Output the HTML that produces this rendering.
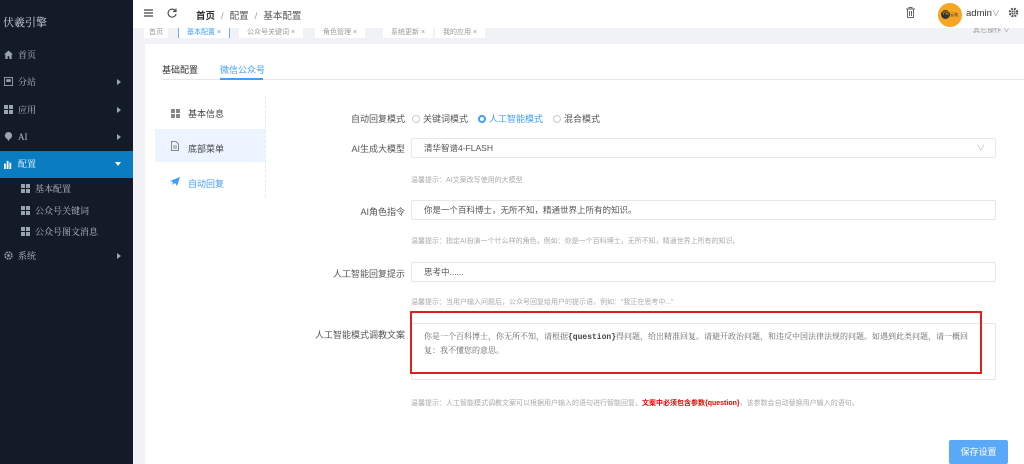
<!DOCTYPE html>
<html><head><meta charset="utf-8"><style>
*{margin:0;padding:0;box-sizing:border-box}
body{width:1024px;height:464px;overflow:hidden;font-family:"Liberation Sans","Noto Sans CJK SC",sans-serif;background:#f0f2f5;position:relative;font-size:9px;color:#333}
.abs{position:absolute}
.side{left:0;top:0;width:133px;height:464px;background:#131b29;color:#b8bfca}
.side .it{position:absolute;left:0;width:133px;height:20px;line-height:20px;padding-left:18px;font-size:9px;font-family:"Liberation Serif","Noto Serif CJK SC",serif}
.side .ic{position:absolute;left:4px;top:5px;width:9px;height:9px}
.side .arr{position:absolute;right:12px;top:7px;width:0;height:0;border-left:4px solid #9aa;border-top:3px solid transparent;border-bottom:3px solid transparent}
.grid{position:absolute;width:9px;height:9px;background:linear-gradient(#131b29,#131b29) 4px 0/1px 9px no-repeat,linear-gradient(#131b29,#131b29) 0 4px/9px 1px no-repeat,#9aa3b0}
.hdr{left:133px;top:0;width:891px;height:28px;background:#fff}
.card{left:145px;top:44px;width:879px;height:420px;background:#fff}
.lbl{position:absolute;right:619px;font-size:9px;color:#555;text-align:right;white-space:nowrap}
.inp{position:absolute;left:411px;width:585px;height:20px;border:1px solid #e4e7ed;border-radius:2px;background:#fff;padding-left:12px;line-height:18px;font-size:8.5px;color:#555}
.hint{position:absolute;left:411px;font-size:7px;color:#aaa;white-space:nowrap}
.rad{display:inline-block;width:8px;height:8px;border:1px solid #ccc;border-radius:50%;vertical-align:-1px;margin-right:3px}
</style></head><body>
<div class="abs side">
 <div class="abs" style="left:3px;top:14px;font-size:11px;color:#cfd5de;font-family:'Liberation Serif','Noto Serif CJK SC',serif">伏羲引擎</div>
 <div class="it" style="top:45px"><svg class="ic" viewBox="0 0 10 10"><path d="M0 5L5 0.5L10 5H8.5V10H6V7H4V10H1.5V5Z" fill="#9aa3b0"/></svg>首页</div>
 <div class="it" style="top:72px"><svg class="ic" viewBox="0 0 10 10"><rect x="0.5" y="0.5" width="9" height="9" fill="none" stroke="#9aa3b0"/><rect x="2.5" y="2.5" width="5" height="3" fill="#9aa3b0"/></svg>分站<span class="arr"></span></div>
 <div class="it" style="top:100px"><span class="grid" style="left:4px;top:5px"></span>应用<span class="arr"></span></div>
 <div class="it" style="top:127px"><svg class="ic" viewBox="0 0 10 10"><circle cx="5" cy="4" r="4" fill="#9aa3b0"/><path d="M3 7L5 10L7 7Z" fill="#9aa3b0"/></svg>AI<span class="arr"></span></div>
 <div class="it" style="top:151px;height:27px;line-height:27px;background:#0a7cc1;color:#fff"><svg class="ic" style="top:9px" viewBox="0 0 10 10"><rect x="0" y="4" width="2" height="6" fill="#fff"/><rect x="3" y="1" width="2" height="9" fill="#fff"/><rect x="6" y="3" width="2" height="7" fill="#fff"/></svg>配置<span class="arr" style="top:11px;border-left:3px solid transparent;border-right:3px solid transparent;border-top:4px solid #fff;border-bottom:0"></span></div>
 <div class="it" style="top:179px;padding-left:35px"><span class="grid" style="left:21px;top:5px"></span>基本配置</div>
 <div class="it" style="top:201px;padding-left:35px"><span class="grid" style="left:21px;top:5px"></span>公众号关键词</div>
 <div class="it" style="top:222px;padding-left:35px"><span class="grid" style="left:21px;top:5px"></span>公众号图文消息</div>
 <div class="it" style="top:246px"><svg class="ic" viewBox="0 0 10 10"><circle cx="5" cy="5" r="3.8" fill="none" stroke="#9aa3b0" stroke-width="1.6" stroke-dasharray="2 1"/><circle cx="5" cy="5" r="1.5" fill="#9aa3b0"/></svg>系统<span class="arr"></span></div>
</div>
<div class="abs hdr">
 <svg class="abs" style="left:11px;top:9px" width="9" height="8"><path d="M0 1H9M0 4H9M0 7H9" stroke="#444" stroke-width="1.3"/></svg>
 <svg class="abs" style="left:34px;top:8px" width="10" height="10" viewBox="0 0 10 10"><path d="M8.5 3A4 4 0 1 0 9 6" fill="none" stroke="#555" stroke-width="1.2"/><path d="M9 0.5V3.5H6" fill="none" stroke="#555" stroke-width="1.2"/></svg>
 <div class="abs" style="left:63px;top:8px;font-size:9.5px;color:#333"><b>首页</b><span style="color:#999;margin:0 6px">/</span><span style="color:#555">配置</span><span style="color:#999;margin:0 6px">/</span><span style="color:#555">基本配置</span></div>
 <svg class="abs" style="left:773px;top:7px" width="9" height="11" viewBox="0 0 9 11"><path d="M0 2H9M3 2V0.5H6V2M1.5 2V10.5H7.5V2M3.5 4V9M5.5 4V9" fill="none" stroke="#666"/></svg>
 <div class="abs" style="left:805px;top:3px;width:24px;height:24px;border-radius:50%;background:#f5a623"><div class="abs" style="left:3px;top:7px;width:9px;height:9px;border-radius:50%;background:#333;color:#f5a623;font-size:5px;line-height:9px;text-align:center">YR</div><div class="abs" style="left:12px;top:9px;font-size:4px;color:#333">云驰</div></div>
 <div class="abs" style="left:833px;top:8px;font-size:9.5px;color:#333">admin<span style="color:#888;font-size:8px">∨</span></div>
 <svg class="abs" style="left:875px;top:7px" width="11" height="11" viewBox="0 0 12 12"><circle cx="6" cy="6" r="4" fill="none" stroke="#555" stroke-width="2.5" stroke-dasharray="2 1.2"/><circle cx="6" cy="6" r="1.6" fill="none" stroke="#555"/></svg>
</div>
<div class="abs" style="left:133px;top:28px;width:891px;height:10px;overflow:hidden;font-size:7px;color:#999">
 <div class="abs" style="left:11px;top:-3px;background:#fff;padding:2px 5px;">首页</div>
 <div class="abs" style="left:45px;top:-4px;background:#fff;border:1px solid #6bb0f0;color:#409eff;padding:2px 8px">基本配置 ×</div>
 <div class="abs" style="left:106px;top:-3px;background:#fff;padding:2px 8px">公众号关键词 ×</div>
 <div class="abs" style="left:182px;top:-3px;background:#fff;padding:2px 8px">角色管理 ×</div>
 <div class="abs" style="left:250px;top:-3px;background:#fff;padding:2px 8px">系统更新 ×</div>
 <div class="abs" style="left:302px;top:-3px;background:#fff;padding:2px 8px">我的应用 ×</div>
 <div class="abs" style="left:840px;top:-3px">其它操作 ∨</div>
</div>
<div class="abs card"></div>
<div class="abs" style="left:162px;top:63px;font-size:9px;color:#333">基础配置</div>
<div class="abs" style="left:220px;top:63px;font-size:9px;color:#409eff">微信公众号</div>
<div class="abs" style="left:162px;top:79px;width:862px;height:1px;background:#e4e7ed"></div>
<div class="abs" style="left:220px;top:78px;width:43px;height:2px;background:#409eff"></div>
<div class="abs" style="left:265px;top:96px;width:1px;height:101px;border-left:1px dashed #e8e8e8"></div>
<span class="grid" style="left:171px;top:109px;background:linear-gradient(#fff,#fff) 4px 0/1px 9px no-repeat,linear-gradient(#fff,#fff) 0 4px/9px 1px no-repeat,#888"></span>
<div class="abs" style="left:188px;top:107px;font-size:9px;color:#444">基本信息</div>
<div class="abs" style="left:155px;top:129px;width:110px;height:33px;background:#ecf5ff"></div>
<svg class="abs" style="left:171px;top:141px" width="8" height="10" viewBox="0 0 8 10"><path d="M0.5 0.5H5L7.5 3V9.5H0.5Z M2 5H6M2 7H6" fill="none" stroke="#888"/></svg>
<div class="abs" style="left:188px;top:142px;font-size:9px;color:#444">底部菜单</div>
<svg class="abs" style="left:170px;top:177px" width="10" height="9" viewBox="0 0 10 9"><path d="M0 4L10 0L7 9L5 6L2 8L3 5Z" fill="#409eff"/></svg>
<div class="abs" style="left:188px;top:177px;font-size:9px;color:#409eff">自动回复</div>

<div class="lbl" style="top:112px">自动回复模式</div>
<div class="abs" style="left:412px;top:112px;font-size:9px;color:#555;white-space:nowrap"><span class="rad"></span>关键词模式&nbsp;&nbsp;&nbsp;&nbsp;<span class="rad" style="border:2.5px solid #409eff;background:#fff"></span><span style="color:#409eff">人工智能模式</span>&nbsp;&nbsp;&nbsp;&nbsp;<span class="rad"></span>混合模式</div>
<div class="lbl" style="top:142px">AI生成大模型</div>
<div class="inp" style="top:138px">清华智谱4-FLASH<span style="position:absolute;right:10px;color:#bbb">∨</span></div>
<div class="hint" style="top:175px">温馨提示：AI文案改写使用的大模型</div>
<div class="lbl" style="top:205px">AI角色指令</div>
<div class="inp" style="top:200px">你是一个百科博士，无所不知，精通世界上所有的知识。</div>
<div class="hint" style="top:236px">温馨提示：指定AI扮演一个什么样的角色，例如：你是一个百科博士，无所不知，精通世界上所有的知识。</div>
<div class="lbl" style="top:267px">人工智能回复提示</div>
<div class="inp" style="top:262px">思考中......</div>
<div class="hint" style="top:297px">温馨提示：当用户输入问题后，公众号回复给用户的提示语，例如：“我正在思考中...”</div>
<div class="lbl" style="top:328px">人工智能模式调教文案</div>
<div class="inp" style="top:323px;height:57px;padding:6px 12px;line-height:13px;font-family:'Liberation Serif','Noto Serif CJK SC',serif;font-size:8px;color:#666;white-space:normal">你是一个百科博士，你无所不知，请根据<b style="font-family:'Liberation Mono',monospace;color:#444">{question}</b>得问题，给出精准回复。请避开政治问题，和违反中国法律法规的问题。如遇到此类问题，请一概回复：我不懂您的意思。</div>
<div class="abs" style="left:410px;top:311px;width:572px;height:63px;border:2px solid #e02020"></div>
<div class="hint" style="top:398px">温馨提示：人工智能模式调教文案可以根据用户输入的语句进行智能回复，<b style="color:#e00">文案中必须包含参数{question}</b>，该参数会自动替换用户输入的语句。</div>
<div class="abs" style="left:949px;top:440px;width:59px;height:24px;background:#5aa8f8;border-radius:2px;color:#fff;font-size:9px;line-height:24px;text-align:center">保存设置</div>
</body></html>
